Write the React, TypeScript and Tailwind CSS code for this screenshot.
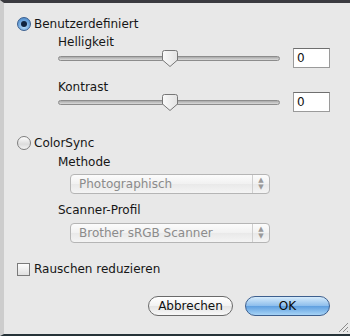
import React from "react";

const font = { fontFamily: '"DejaVu Sans", "Liberation Sans", sans-serif' };

function Radio({ checked }: { checked?: boolean }) {
  if (checked) {
    return (
      <span className="flex h-[14px] w-[14px] shrink-0 items-center justify-center rounded-full border border-[#3a5f8f] bg-[radial-gradient(circle_at_50%_70%,#b9dcf8_0%,#6fa7dd_55%,#3f7cc0_100%)]">
        <span className="h-[6px] w-[6px] rounded-full bg-[#10243e]" />
      </span>
    );
  }
  return (
    <span className="block h-[14px] w-[14px] shrink-0 rounded-full border border-[#7d7d7d] bg-[linear-gradient(#fdfdfd,#dcdcdc_60%,#f4f4f4)]" />
  );
}

function Thumb() {
  return (
    <svg width="16" height="17" viewBox="0 0 16 17">
      <defs>
        <linearGradient id="tg" x1="0" y1="0" x2="1" y2="0">
          <stop offset="0" stopColor="#fafafa" />
          <stop offset="1" stopColor="#e2e2e2" />
        </linearGradient>
      </defs>
      <path d="M2.5 0.5 H13.5 Q15.5 0.5 15.5 2.5 V10 L8 16.5 L0.5 10 V2.5 Q0.5 0.5 2.5 0.5 Z" fill="url(#tg)" stroke="#777" />
    </svg>
  );
}

function SliderRow({ pos }: { pos: number }) {
  return (
    <div className="flex h-[20px] items-center">
      <div className="relative ml-[54px] h-[5px] w-[222px] rounded-full border border-[#8c8c8c] bg-[linear-gradient(#a9a9a9,#dadada)]">
        <div className="absolute top-[-7px]" style={{ left: pos }}>
          <Thumb />
        </div>
      </div>
      <div className="ml-[13px] flex h-[20px] w-[37px] items-center border border-[#9a9a9a] border-t-[#6f6f6f] bg-white pl-[3px] text-[12px] text-[#111]">
        0
      </div>
    </div>
  );
}

function Popup({ label }: { label: string }) {
  return (
    <div className="ml-[66px] flex h-[20px] w-[200px] items-center rounded-[4px] border border-[#b5b5b5] bg-[linear-gradient(#fcfcfc,#f1f1f1_50%,#e9e9e9_51%,#f4f4f4)] text-[12px] text-[#8b8b8b]">
      <span className="flex-1 pl-[8px]">{label}</span>
      <span className="flex h-full w-[17px] flex-col items-center justify-center border-l border-[#cfcfcf] text-[7px] leading-[7px] text-[#9a9a9a]">
        <span>▲</span>
        <span>▼</span>
      </span>
    </div>
  );
}

export default function App() {
  return (
    <div
      className="relative h-[336px] w-[350px] overflow-hidden border-b-2 border-l-[4px] border-t-[3px] border-b-[#263338] border-l-[#cdcdcd] border-t-[#3b3b40] bg-[#e8e8e8] text-[12px] text-[#161616]"
      style={font}
    >
      <div className="flex flex-col">
        <div className="mt-[13px] flex h-[16px] items-center">
          <span className="ml-[13px]"><Radio checked /></span>
          <span className="ml-[3px]">Benutzerdefiniert</span>
        </div>
        <div className="ml-[54px] mt-[2px] h-[16px] leading-[16px]">Helligkeit</div>
        <div className="mt-[-2px]"><SliderRow pos={103} /></div>
        <div className="ml-[54px] mt-[11px] h-[16px] leading-[16px]">Kontrast</div>
        <div className="mt-[-3px]"><SliderRow pos={103} /></div>

        <div className="mt-[23px] flex h-[16px] items-center">
          <span className="ml-[13px]"><Radio /></span>
          <span className="ml-[3px]">ColorSync</span>
        </div>
        <div className="ml-[54px] mt-[3px] h-[16px] leading-[16px]">Methode</div>
        <div className="mt-[4px]"><Popup label="Photographisch" /></div>
        <div className="ml-[54px] mt-[8px] h-[16px] leading-[16px]">Scanner-Profil</div>
        <div className="mt-[5px]"><Popup label="Brother sRGB Scanner" /></div>

        <div className="mt-[18px] flex h-[16px] items-center">
          <span className="ml-[13px] block h-[13px] w-[13px] shrink-0 border border-[#7a7a7a] bg-[linear-gradient(#fdfdfd,#e0e0e0)]" />
          <span className="ml-[4px]">Rauschen reduzieren</span>
        </div>

        <div className="mt-[19px] flex items-center">
          <button className="ml-[144px] flex h-[20px] w-[85px] items-center justify-center rounded-full border border-[#6a6a6a] bg-[linear-gradient(#ffffff,#f2f2f2_50%,#e4e4e4_51%,#f8f8f8)] text-[12px] text-[#111]">
            Abbrechen
          </button>
          <button className="ml-[12px] flex h-[20px] w-[85px] items-center justify-center rounded-full border border-[#3d5f8e] bg-[linear-gradient(#d6ebfb,#8cbdec_50%,#5f9fe0_51%,#a6d3f6)] text-[12px] text-[#0b0b0b]">
            OK
          </button>
        </div>
      </div>
      <svg className="absolute bottom-[1px] right-[1px]" width="12" height="12" viewBox="0 0 12 12">
        <path d="M11 2 L2 11 M11 6 L6 11 M11 10 L10 11" stroke="#8a8a8a" strokeWidth="1" />
      </svg>
    </div>
  );
}
